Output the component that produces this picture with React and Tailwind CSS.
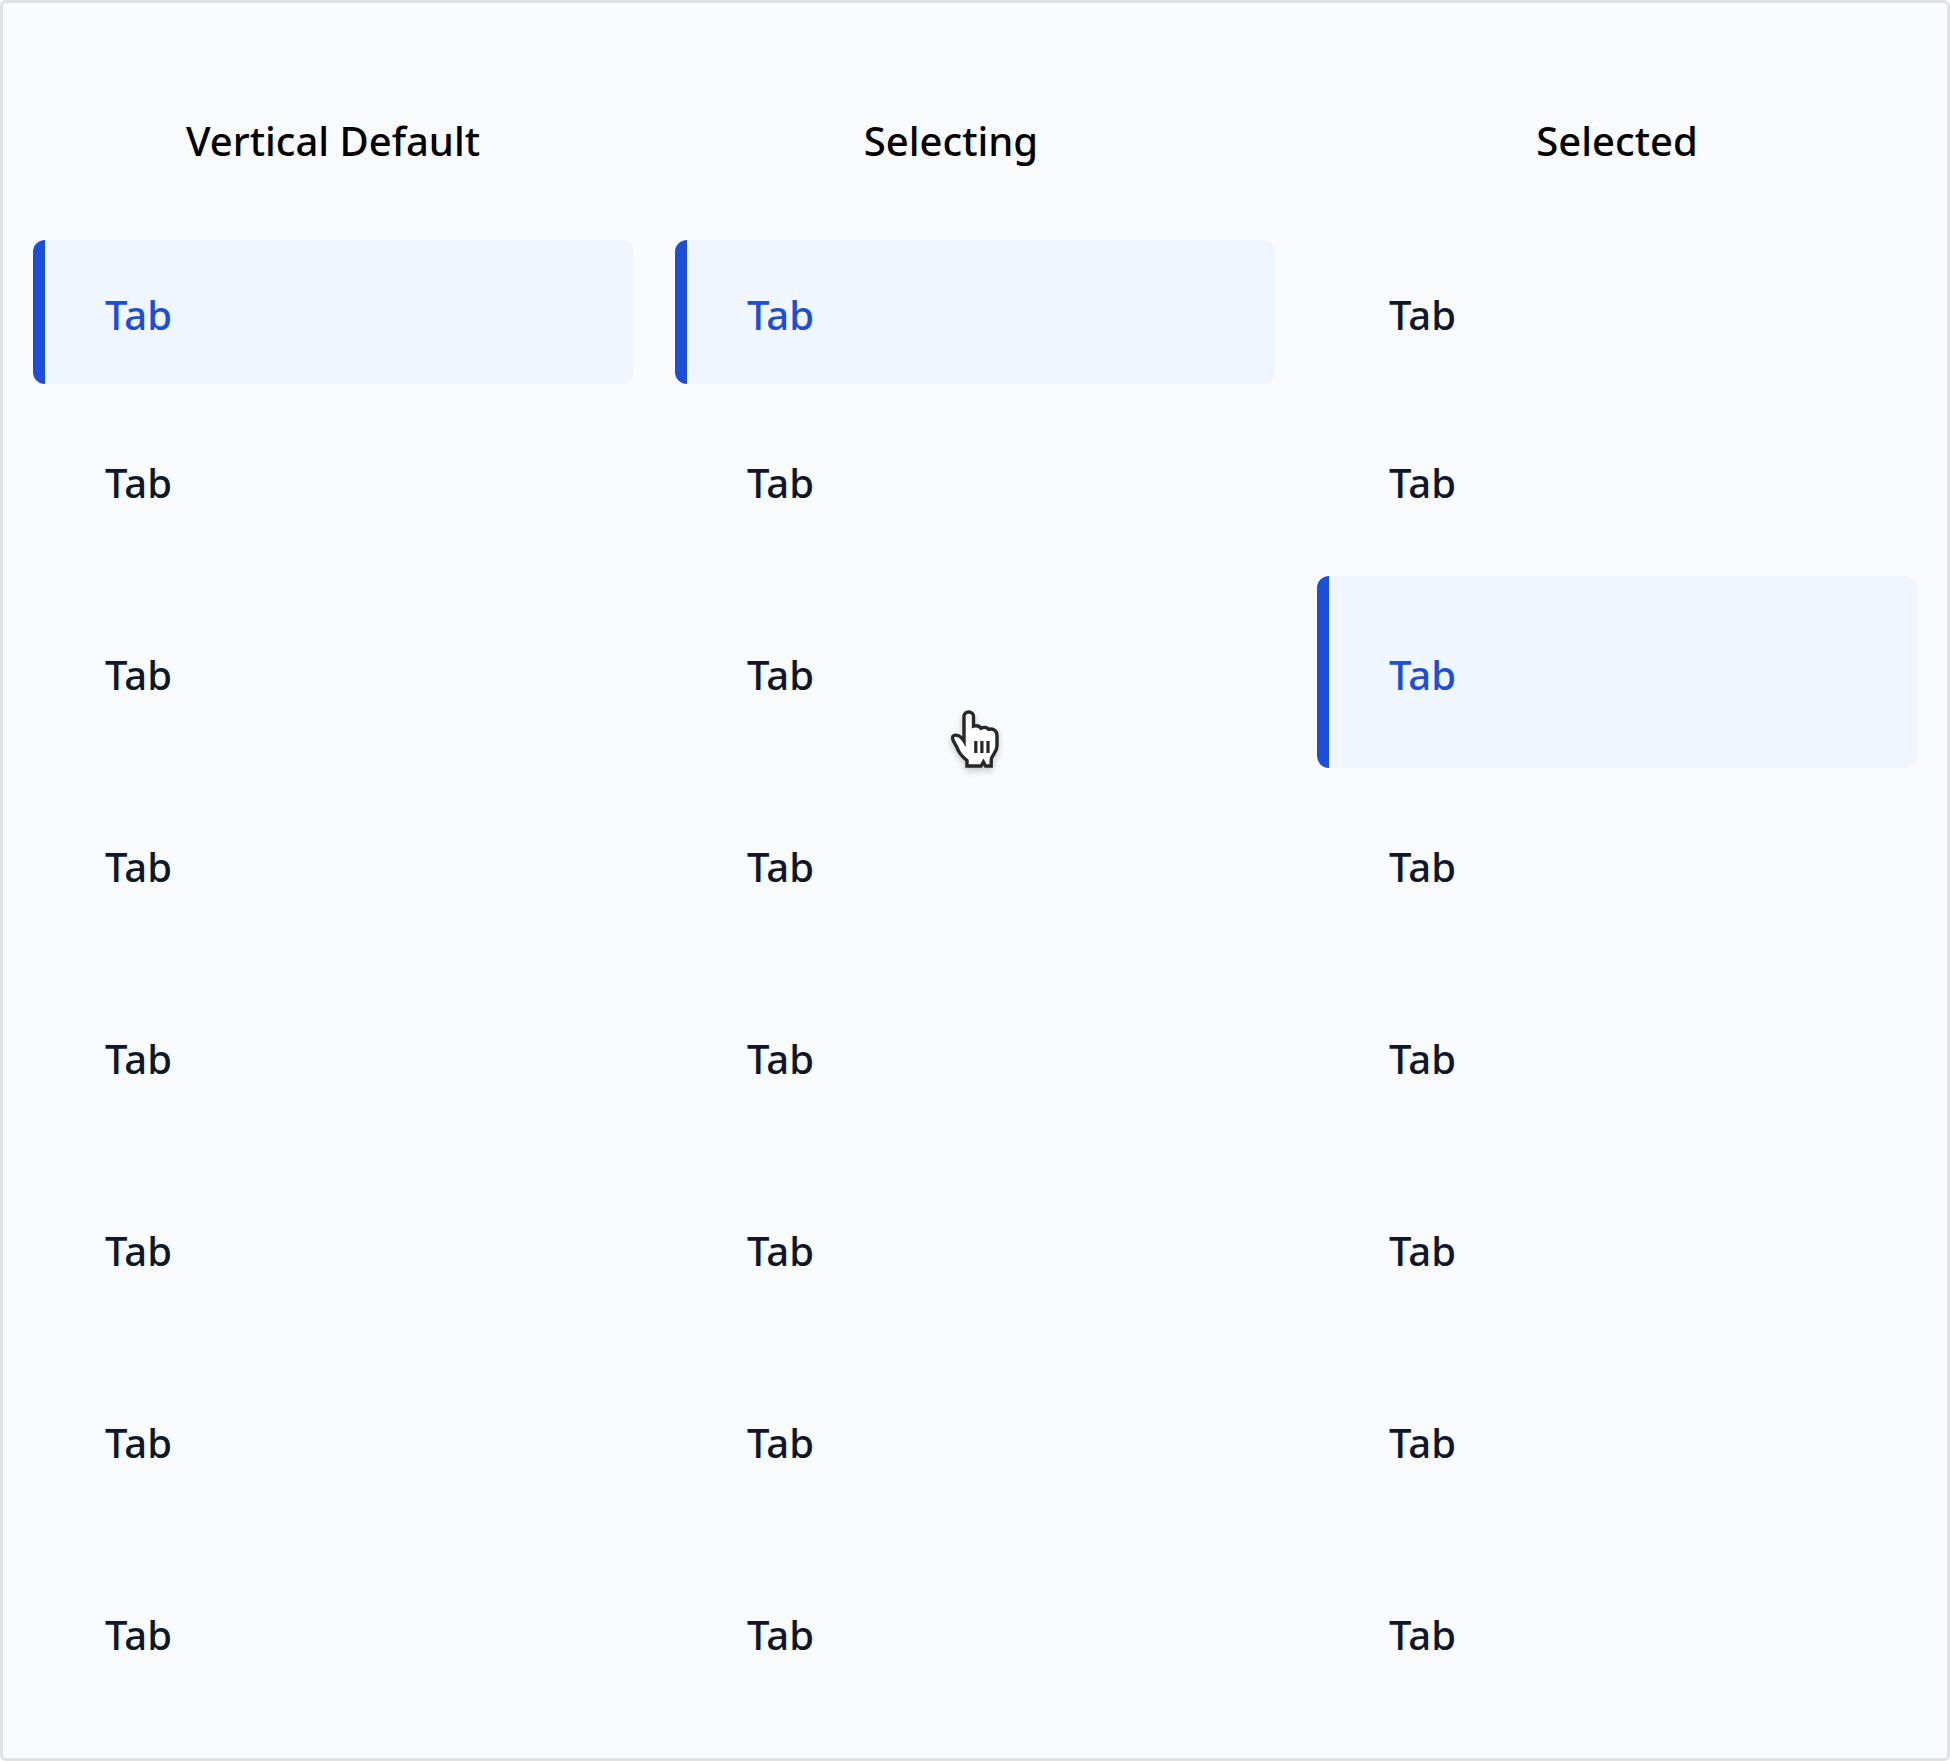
const columns = [
  { title: "Vertical Default", selected: 0 },
  { title: "Selecting", selected: 0, pointer: 2, titleClass: "pr-12" },
  { title: "Selected", selected: 2 },
];

const rows = [0, 1, 2, 3, 4, 5, 6, 7];

function HandPointer() {
  return (
    <svg
      aria-hidden="true"
      viewBox="0 0 90 90"
      className="pointer-events-none absolute top-[119px] left-[243px] size-[90px] overflow-visible drop-shadow-[0_3px_3px_rgba(0,0,0,0.2)]"
    >
      <path
        d="M34 46V21.5C34 18.8 36 17 38.7 17C41.4 17 43.5 18.8 43.5 21.5V31.2C46 30.4 49.3 31 51 33.2C54 31.6 57.3 32.5 58.8 34.4C63.5 33 67 36 67 40.5V51C67 58 61.6 59.5 61.2 65V71H55.6L53.4 67L51 71H37V65.5C32.5 62 28.8 57.5 27.2 53C26 49.5 22.5 46.3 22.5 43C22.5 40.5 24.7 39.8 27 40.3C30.3 41 32.2 43 34 46Z"
        fill="#fff"
        stroke="#272727"
        strokeWidth="3.4"
        strokeLinejoin="miter"
      />
      <path d="M45.8 46V58M51.9 46V58M58 46V58" stroke="#272727" strokeWidth="3.2" />
    </svg>
  );
}

function Tab({ active, first, pointer }) {
  return (
    <button
      type="button"
      role="tab"
      aria-selected={active}
      className={
        "relative flex w-full items-center rounded-xl border-l-[12px] pt-1.5 pl-[60px] text-left " +
        (first ? "h-36 " : "h-48 ") +
        (active
          ? "border-[#1d4ed8] bg-[#eff6ff] text-[#1d4ed8]"
          : "border-transparent text-[#0f172a]")
      }
    >
      Tab
      {pointer && <HandPointer />}
    </button>
  );
}

export default function App() {
  return (
    <div className="bg-white font-['Noto_Sans',sans-serif] text-[40px] leading-[60px] font-medium">
      <main className="grid grid-cols-3 gap-x-[42px] rounded-md border-[3px] border-[#e0e1e3] bg-slate-50 p-[30px] pt-[108px]">
        {columns.map((column) => (
          <section key={column.title} className="flex flex-col">
            <h2 className={"mb-[69px] text-center text-black " + (column.titleClass || "")}>
              {column.title}
            </h2>
            <div role="tablist" aria-orientation="vertical" aria-label={column.title}>
              {rows.map((row) => (
                <Tab
                  key={row}
                  active={row === column.selected}
                  first={row === 0}
                  pointer={row === column.pointer}
                />
              ))}
            </div>
          </section>
        ))}
      </main>
    </div>
  );
}
